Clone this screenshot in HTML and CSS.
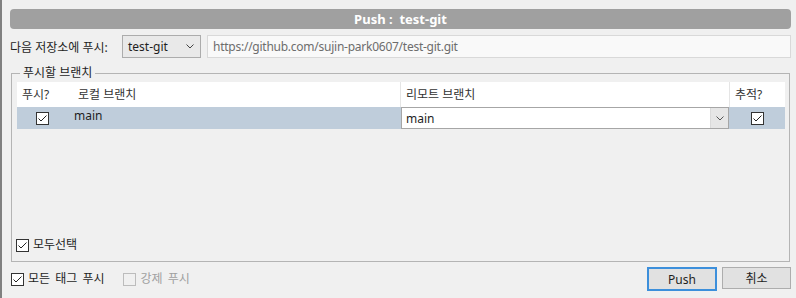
FILE: index.html
```html
<!DOCTYPE html>
<html lang="ko">
  <head>
    <meta charset="UTF-8" />
    <title>Push : test-git</title>
    <link rel="stylesheet" href="styles.css">
  </head>
  <body>
    <div class="window">
      <div class="title-bar">Push :&nbsp; test-git</div>

      <div class="repo-row">
        <span class="repo-label">다음 저장소에 푸시:</span>
        <div class="repo-select">
          <span>test-git</span>
          <svg class="chevron" width="8" height="5" viewBox="0 0 8 5"><polyline points="0.5,0.5 4,4 7.5,0.5" fill="none" stroke="#444" stroke-width="1"/></svg>
        </div>
        <div class="repo-url">https://github.com/sujin-park0607/test-git.git</div>
      </div>

      <fieldset class="branch-group">
        <legend>푸시할 브랜치</legend>
        <div class="branch-body">
          <div class="branch-table">
            <div class="th col-push">푸시?</div>
            <div class="th col-local">로컬 브랜치</div>
            <div class="th col-remote">리모트 브랜치</div>
            <div class="th col-track">추적?</div>

            <div class="td col-push sel"><span class="cb checked"></span></div>
            <div class="td col-local sel"><span class="local-name">main</span></div>
            <div class="td col-remote sel">
              <div class="combo">
                <span class="combo-text">main</span>
                <span class="combo-btn">
                  <svg width="8" height="5" viewBox="0 0 8 5"><polyline points="0.5,0.5 4,4 7.5,0.5" fill="none" stroke="#555" stroke-width="1"/></svg>
                </span>
              </div>
            </div>
            <div class="td col-track sel"><span class="cb checked"></span></div>
          </div>

          <label class="check-line select-all"><span class="cb checked"></span>모두선택</label>
        </div>
      </fieldset>

      <div class="bottom-row">
        <label class="check-line"><span class="cb checked"></span>모든 태그 푸시</label>
        <label class="check-line disabled"><span class="cb"></span>강제 푸시</label>
        <div class="buttons">
          <button class="btn btn-default" type="button">Push</button>
          <button class="btn" type="button">취소</button>
        </div>
      </div>
    </div>
  </body>
</html>
```

FILE: styles.css
```css
html,
body {
  margin: 0;
  padding: 0;
}
body {
  background-color: #f0f0f0;
  font-family: "Noto Sans", "Noto Sans CJK KR", sans-serif;
  font-size: 12px;
  color: #1e1e1e;
}
.window {
  height: 298px;
  box-sizing: border-box;
  border-left: 2px solid #808080;
  padding: 9px 5px 0 8px;
  display: flex;
  flex-direction: column;
}
.title-bar {
  height: 20px;
  line-height: 20px;
  border-radius: 4px;
  background-color: #a0a0a0;
  color: #fff;
  font-weight: bold;
  font-size: 13px;
  text-align: center;
}
.repo-row {
  display: flex;
  align-items: center;
  height: 23px;
  margin-top: 6px;
}
.repo-label {
  width: 112px;
  white-space: nowrap;
}
.repo-select {
  width: 79px;
  height: 23px;
  box-sizing: border-box;
  border: 1px solid #acacac;
  background-color: #e9e9e9;
  display: flex;
  align-items: center;
  justify-content: space-between;
  padding: 0 6px 0 5px;
}
.repo-url {
  flex: 1;
  height: 23px;
  box-sizing: border-box;
  margin-left: 6px;
  border: 1px solid #d9d9d9;
  background-color: #f9f9f9;
  color: #6d6d6d;
  line-height: 21px;
  padding-left: 5px;
  letter-spacing: -0.25px;
}
.branch-group {
  margin: 7px 1px 0 1px;
  padding: 1px 4px 0 5px;
  border: 1px solid #b4b4b4;
  min-width: 0;
}
.branch-group legend {
  padding: 0 3px;
  margin-left: 3px;
  line-height: 16px;
}
.branch-body {
  display: flex;
  flex-direction: column;
  height: 179px;
}
.branch-table {
  display: grid;
  grid-template-columns: 56px 327px 329px 56px;
  grid-template-rows: 25px 22px;
}
.th {
  background-color: #fff;
  color: #333;
  line-height: 25px;
  padding-left: 5px;
  white-space: nowrap;
}
.th.col-remote,
.th.col-track {
  border-left: 1px solid #e5e5e5;
}
.td.sel {
  background-color: #bfcddb;
}
.td.col-push,
.td.col-track {
  display: flex;
  align-items: center;
  justify-content: center;
}
.td.col-push {
  justify-content: flex-start;
  padding-left: 19px;
}
.td.col-track {
  padding-left: 1px;
}
.local-name {
  display: block;
  padding-left: 1px;
  line-height: 18px;
}
.td.col-remote {
  padding-left: 1px;
}
.combo {
  height: 22px;
  box-sizing: border-box;
  border: 1px solid #a6a6a6;
  background-color: #fff;
  display: flex;
  align-items: center;
}
.combo-text {
  flex: 1;
  padding-left: 4px;
}
.combo-btn {
  width: 17px;
  height: 100%;
  background-color: #e6e6e6;
  border-left: 1px solid #dadada;
  display: flex;
  align-items: center;
  justify-content: center;
}
.cb {
  width: 13px;
  height: 13px;
  box-sizing: border-box;
  border: 1px solid #333;
  background-color: #fff;
  display: inline-block;
  flex: none;
}
.cb.checked {
  background-image: url("data:image/svg+xml;utf8,<svg xmlns='http://www.w3.org/2000/svg' width='11' height='11' viewBox='0 0 11 11'><polyline points='1.5,5.5 4,8 9.5,2.5' fill='none' stroke='%23222' stroke-width='1'/></svg>");
  background-repeat: no-repeat;
}
.check-line {
  display: flex;
  align-items: center;
  line-height: 16px;
  white-space: nowrap;
  word-spacing: 2px;
}
.check-line .cb {
  margin-right: 4px;
}
.select-all {
  margin-top: auto;
  margin-bottom: 8px;
  margin-left: -1px;
}
.bottom-row {
  display: flex;
  align-items: center;
  height: 24px;
  margin-top: 5px;
  padding-left: 1px;
}
.check-line.disabled {
  margin-left: 19px;
  color: #a0a0a0;
}
.check-line.disabled .cb {
  border-color: #bcbcbc;
  background-color: #f0f0f0;
}
.buttons {
  margin-left: auto;
  display: flex;
  gap: 5px;
}
.btn {
  width: 69px;
  height: 22px;
  border: 1px solid #adadad;
  background-color: #e1e1e1;
  font-family: "Noto Sans", "Noto Sans CJK KR", sans-serif;
  font-size: 12px;
  color: #1e1e1e;
  padding: 0;
}
.btn-default {
  width: 70px;
  height: 24px;
  border: 2px solid #3c8fdb;
}
```
